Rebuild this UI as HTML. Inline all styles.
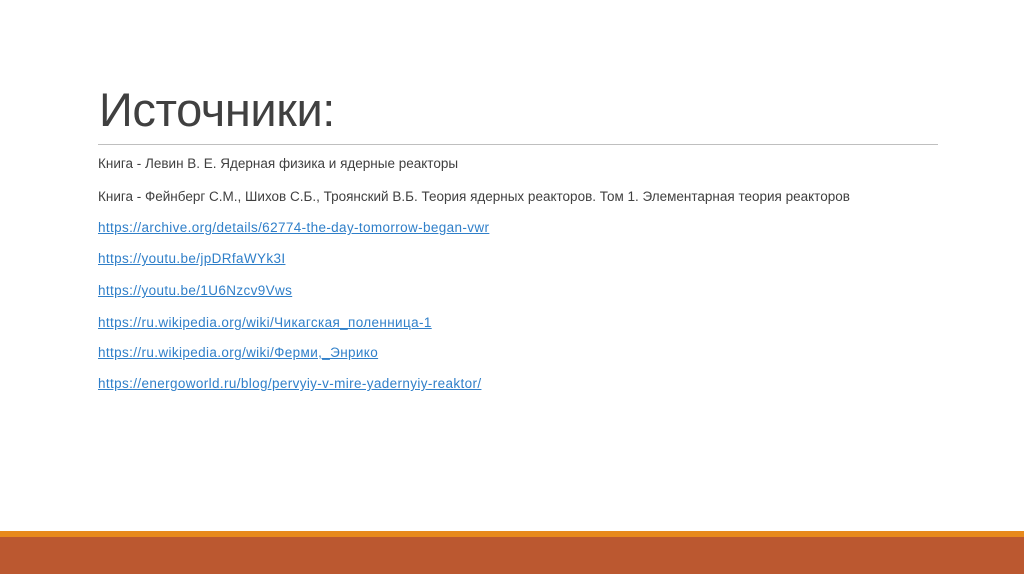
<!DOCTYPE html>
<html><head><meta charset="utf-8"><style>
body{margin:0;width:1024px;height:574px;background:#fff;position:relative;overflow:hidden;font-family:"Liberation Sans",sans-serif}
.t{position:absolute;left:99px;top:82px;font-size:47px;color:#404040;letter-spacing:-0.4px}
.hr{position:absolute;left:98px;top:144px;width:840px;height:1px;background:#bfbfbf}
.l{position:absolute;left:98px;font-size:13.5px;color:#404040;white-space:nowrap}
a{color:#2f7fc9;text-decoration:underline;letter-spacing:0.37px}
.o{position:absolute;left:0;top:531px;width:1024px;height:6px;background:#e8891c}
.b{position:absolute;left:0;top:537px;width:1024px;height:37px;background:#bb5830}
</style></head><body>
<div class="t">Источники:</div>
<div class="hr"></div>
<div class="l" style="top:156px">Книга - Левин В. Е. Ядерная физика и ядерные реакторы</div>
<div class="l" style="top:189px">Книга - Фейнберг С.М., Шихов С.Б., Троянский В.Б. Теория ядерных реакторов. Том 1. Элементарная теория реакторов</div>
<div class="l" style="top:220px"><a>https://archive.org/details/62774-the-day-tomorrow-began-vwr</a></div>
<div class="l" style="top:251px"><a>https://youtu.be/jpDRfaWYk3I</a></div>
<div class="l" style="top:283px"><a>https://youtu.be/1U6Nzcv9Vws</a></div>
<div class="l" style="top:315px"><a>https://ru.wikipedia.org/wiki/Чикагская_поленница-1</a></div>
<div class="l" style="top:345px"><a>https://ru.wikipedia.org/wiki/Ферми,_Энрико</a></div>
<div class="l" style="top:376px"><a>https://energoworld.ru/blog/pervyiy-v-mire-yadernyiy-reaktor/</a></div>
<div class="o"></div><div class="b"></div>
</body></html>
